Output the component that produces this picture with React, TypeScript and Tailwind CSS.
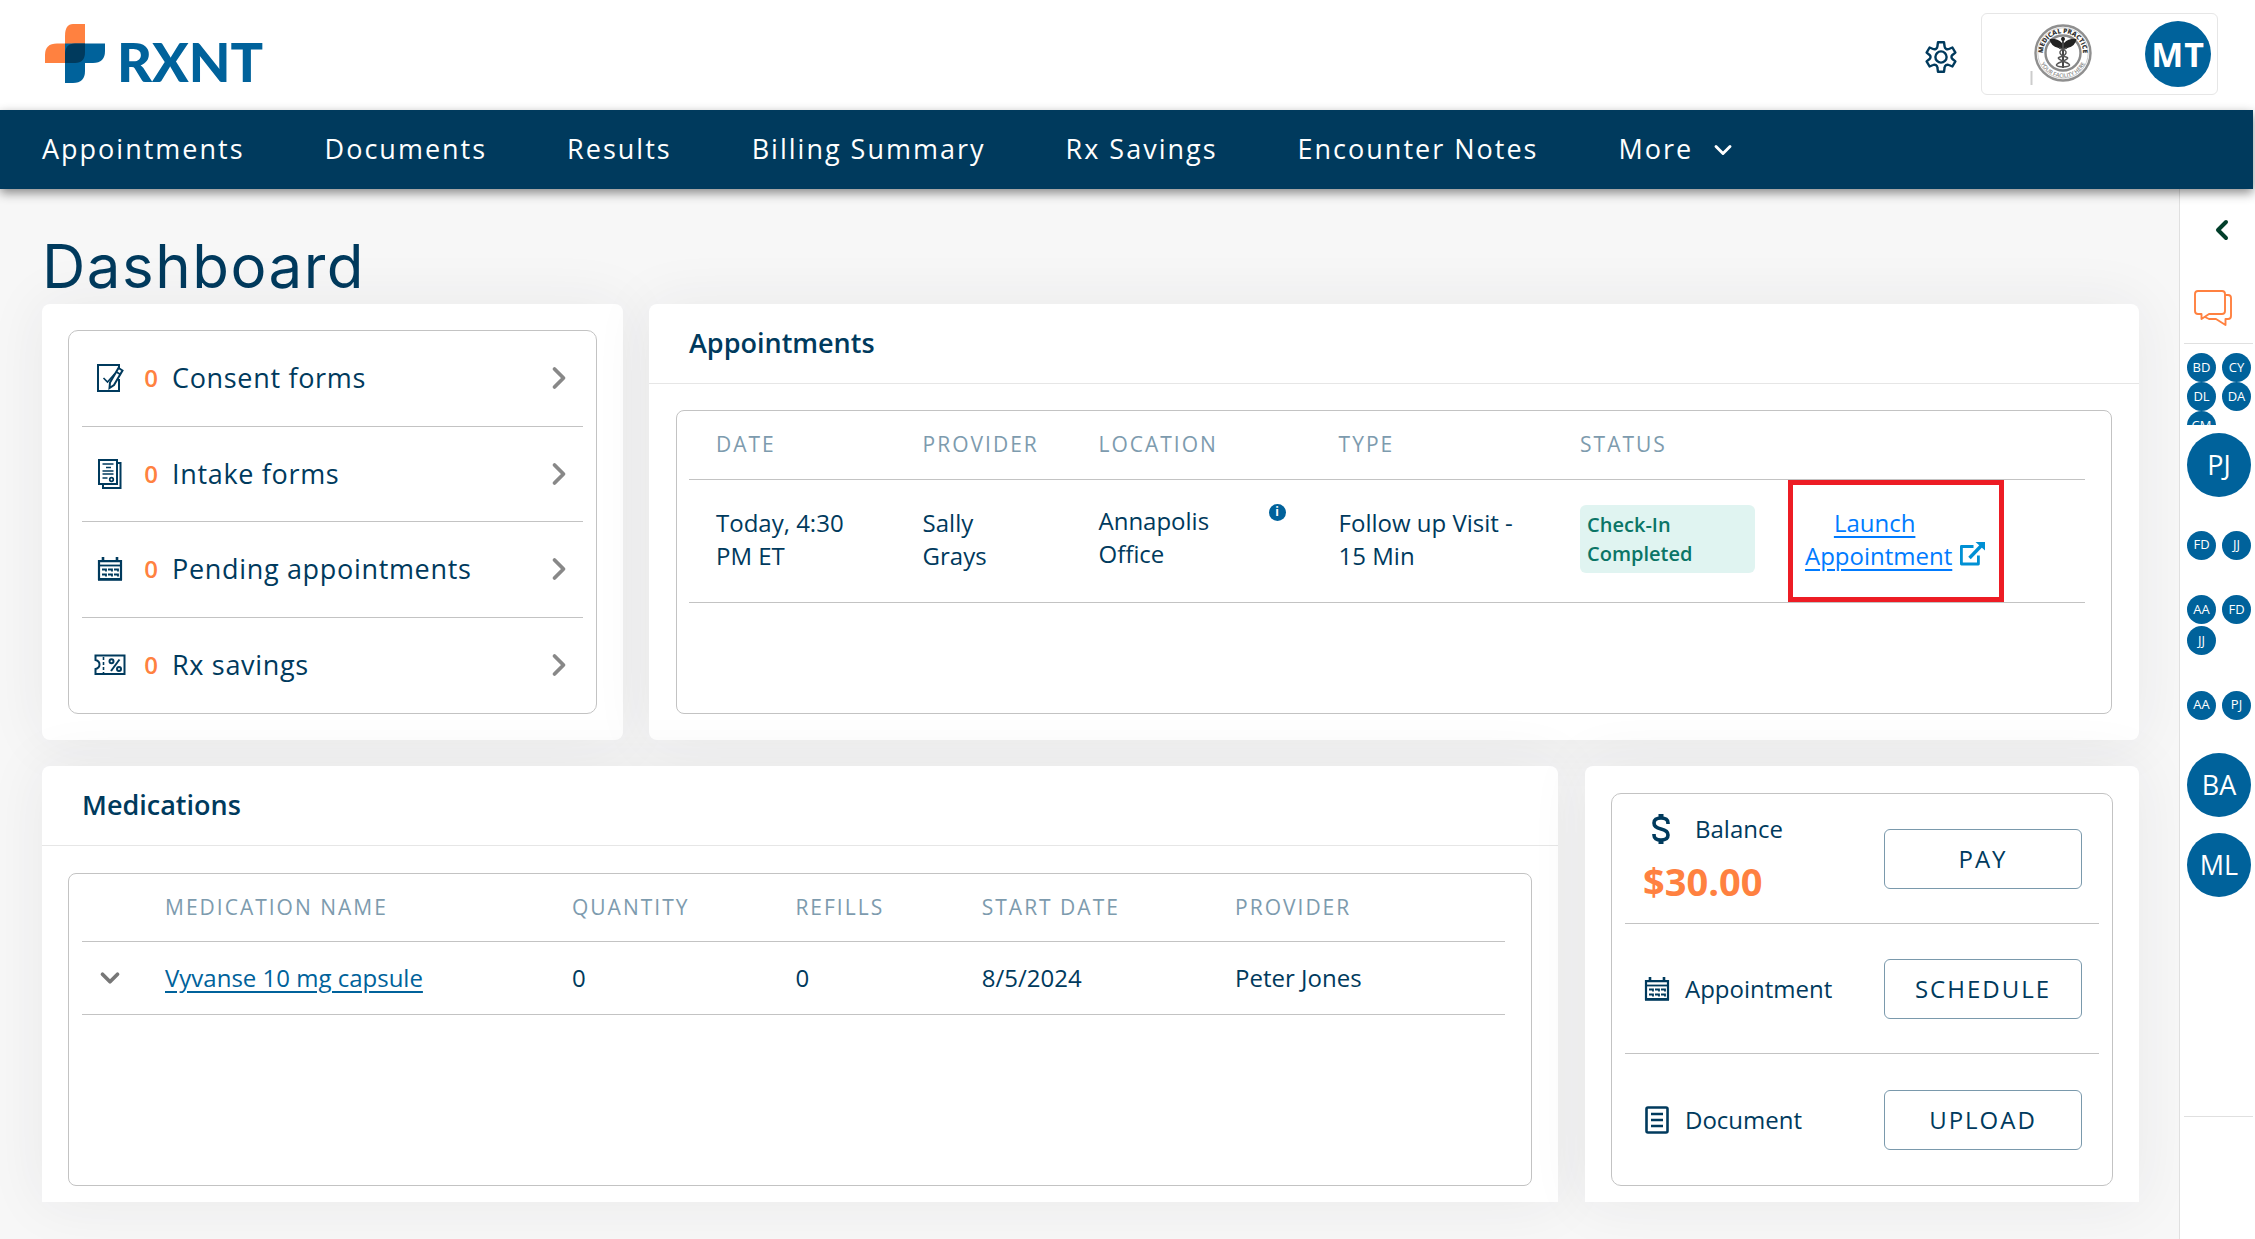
import { ChevronDown, ChevronLeft, ChevronRight } from 'lucide-react'

type IconProps = { className?: string }

const navItems = ['Appointments', 'Documents', 'Results', 'Billing Summary', 'Rx Savings', 'Encounter Notes']

function LogoMark() {
  return (
    <svg className="h-[59px] w-[60px]" viewBox="0 0 60 59" aria-hidden="true">
      <path d="M28 0h12v39H20V12Q20 0 28 0z" fill="#ff8140" />
      <path d="M12 19.500h28V39H0V31Q0 19.500 12 19.500z" fill="#ff8140" />
      <path d="M20 19.500h40V27q0 12-12 12H40v8q0 12-12 12h-8z" fill="#00629b" />
      <path d="M30 19.500h10V28q0 11-10 11H20V30.500q0-11 10-11z" fill="#003a5d" />
    </svg>
  )
}

function GearIcon({ className }: IconProps) {
  return (
    <svg className={className} viewBox="0 0 32 32" fill="none" stroke="currentColor" strokeWidth="2.400" strokeLinejoin="round" aria-hidden="true">
      <path d="M13 1.200h6l.6 4.300a3 3 0 0 0 4.300 2.500l3.500-1.500 3 5.100-3 2.400a2.600 2.600 0 0 0 0 4l3 2.400-3 5.100-3.500-1.500a3 3 0 0 0-4.300 2.500l-.6 4.300h-6l-.6-4.300a3 3 0 0 0-4.300-2.500l-3.500 1.500-3-5.100 3-2.400a2.600 2.600 0 0 0 0-4l-3-2.400 3-5.100L8.100 8a3 3 0 0 0 4.300-2.500z" />
      <circle cx="16" cy="16" r="5.600" />
    </svg>
  )
}

function PracticeSeal() {
  return (
    <svg className="h-[66px] w-[66px]" viewBox="0 0 66 66" role="img" aria-label="Medical practice">
      <defs>
        <path id="seal-top" d="M13 32a20 20 0 0 1 40 0" />
        <path id="seal-bottom" d="M8.500 32a24.500 24.500 0 0 0 49 0" />
      </defs>
      <circle cx="33" cy="32" r="27.500" fill="none" stroke="#8f8f8f" strokeWidth="2.400" />
      <circle cx="33" cy="32" r="25.200" fill="none" stroke="#cfcfcf" strokeWidth="1" />
      <circle cx="33" cy="32" r="17.500" fill="none" stroke="#8a8a8a" strokeWidth="2.400" />
      <text fontFamily="Open Sans, sans-serif" fontSize="6.500" fontWeight="800" fill="#333">
        <textPath href="#seal-top" startOffset="50%" textAnchor="middle">MEDICAL PRACTICE</textPath>
      </text>
      <text fontFamily="Open Sans, sans-serif" fontSize="5.500" fontWeight="600" fill="#888">
        <textPath href="#seal-bottom" startOffset="50%" textAnchor="middle">YOUR FACILITY HERE</textPath>
      </text>
      <path d="M32 22q-5-5-12.500-4 1 7 9 9l3.500 1zM34 22q5-5 12.500-4-1 7-9 9l-3.500 1z" fill="#222" />
      <path d="M33 16v31" stroke="#333" strokeWidth="1.800" />
      <path d="M29 27q8 2 7 5t-6 4 5 5-2 5" fill="none" stroke="#555" strokeWidth="1.500" />
      <path d="M37 27q-8 2-7 5t6 4-5 5 2 5" fill="none" stroke="#555" strokeWidth="1.500" />
      <circle cx="33" cy="18" r="2" fill="#222" />
      <path d="M1.500 50v14" stroke="#ccc" strokeWidth="2" />
    </svg>
  )
}

function ConsentIcon() {
  return (
    <svg className="h-[30px] w-7" viewBox="0 0 28 30" fill="none" stroke="currentColor" strokeWidth="2" aria-hidden="true">
      <path d="M23 6V2H2v26h21V16" />
      <path d="M7.500 15l4 4 7.500-8.500" strokeWidth="1.600" />
      <path d="M22.500 5l4 2.500-8.500 14.500-4.500 3 .5-5.500z" strokeWidth="2" fill="#fff" />
      <path d="M20.500 9l4 2.400" strokeWidth="1.800" />
    </svg>
  )
}

function IntakeIcon() {
  return (
    <svg className="h-[30px] w-7" viewBox="0 0 28 30" fill="none" stroke="currentColor" strokeWidth="2" aria-hidden="true">
      <path d="M3 1h18v24H3z" />
      <path d="M21 4h3.500v25H7v-4" />
      <path d="M6.500 5h11M10 8.500h5M6.500 12h11M6.500 15h11M6.500 19h5" strokeWidth="1.700" />
      <circle cx="15.500" cy="20.500" r="1.800" strokeWidth="1.700" />
    </svg>
  )
}

function CalendarIcon() {
  return (
    <svg className="h-6 w-7" viewBox="0 0 28 24" fill="none" stroke="currentColor" strokeWidth="2.200" aria-hidden="true">
      <path d="M3 4.200h22V22H3z" />
      <path d="M2 22.400h24" strokeWidth="2.800" />
      <path d="M7 0v5M21 0v5" strokeWidth="2.600" />
      <path d="M4 8.500h20" strokeWidth="1.800" />
      <path d="M6 12.500h4v2M12 12.500h4v2M18 12.500h4v2M6 17.500h4v2M12 17.500h4v2M18 17.500h4v2" strokeWidth="1.800" />
    </svg>
  )
}

function CouponIcon() {
  return (
    <svg className="h-[22px] w-8" viewBox="0 0 32 22" fill="none" stroke="currentColor" strokeWidth="2" aria-hidden="true">
      <path d="M1.500 1.500h29v18.500h-29v-5q4-1 4-4.500t-4-4.500z" />
      <path d="M9.500 3v16" strokeDasharray="3 2" strokeWidth="1.600" />
      <path d="M25.500 5.500l-8.500 11.500" />
      <circle cx="17.500" cy="7.200" r="2" />
      <circle cx="25" cy="15" r="2" />
    </svg>
  )
}

function DollarIcon() {
  return (
    <svg className="h-8 w-5" viewBox="0 0 20 32" fill="none" stroke="currentColor" strokeWidth="3.600" aria-hidden="true">
      <path d="M17 11V10q0-5-7-5t-7 5q0 4.500 7 6t7 6q0 5-7 5t-7-5v-1" />
      <path d="M10 1v4M10 27v4" strokeWidth="5" />
    </svg>
  )
}

function DocumentIcon() {
  return (
    <svg className="h-7 w-6" viewBox="0 0 24 28" fill="none" stroke="currentColor" strokeWidth="2.600" aria-hidden="true">
      <rect x="1.500" y="1.500" width="21" height="25" rx="1.500" />
      <path d="M6 8h12M6 14h12M6 20h12" strokeWidth="2.400" />
    </svg>
  )
}

function LaunchIcon() {
  return (
    <svg className="h-6 w-7" viewBox="0 0 28 24" fill="none" stroke="#0090d4" strokeWidth="2.800" aria-hidden="true">
      <path d="M15.500 4.500H3.400V22h17v-8.500" strokeLinejoin="round" />
      <path d="M11.500 16L23 4" strokeWidth="3.400" />
      <path d="M17.500 0H27v8.500z" fill="#0090d4" stroke="none" />
    </svg>
  )
}

function ChatIcon() {
  return (
    <svg className="h-9 w-[38px]" viewBox="0 0 38 36" fill="none" stroke="#ff8140" strokeWidth="1.900" strokeLinejoin="round" aria-hidden="true">
      <path d="M4 1h24q3 0 3 3v17q0 3-3 3H15l-7.500 5V24H4q-3 0-3-3V4q0-3 3-3z" />
      <path d="M31 5h3q3 0 3 3v18q0 3-3 3h-2.500v6L22 29h-7l-4-2" />
    </svg>
  )
}

const formRows = [
  { label: 'Consent forms', Icon: ConsentIcon },
  { label: 'Intake forms', Icon: IntakeIcon },
  { label: 'Pending appointments', Icon: CalendarIcon },
  { label: 'Rx savings', Icon: CouponIcon },
]

// each entry is one conversation thread
const threads = [['PJ'], ['FD', 'JJ'], ['AA', 'FD', 'JJ'], ['AA', 'PJ'], ['BA'], ['ML']]

const card = 'bg-white shadow-[0_0_60px_rgba(40,40,60,0.07)]'
const cardTitle = 'flex h-20 items-center border-b border-[#e6e6e6] pl-10 text-[27px] font-semibold'
const th = 'pl-[27px] text-left font-normal tracking-[2px] text-[#7d9bae]'
const td = 'pl-[27px] pb-1'
const actionButton =
  'h-[60px] w-[198px] rounded-md border border-[#7a99ac] bg-white text-2xl tracking-[2px] text-[#003a5d]'

function SmallAvatar({ initials }: { initials: string }) {
  return (
    <span className="flex h-[29px] w-[29px] items-center justify-center rounded-full bg-[#00629b] text-[13px] text-white">
      {initials}
    </span>
  )
}

function Thread({ people }: { people: string[] }) {
  if (people.length === 1) {
    return (
      <button className="flex h-20 w-full items-center pl-[7px]">
        <span className="flex h-16 w-16 items-center justify-center rounded-full bg-[#00629b] text-[27px] text-white">
          {people[0]}
        </span>
      </button>
    )
  }
  return (
    <button className="flex h-20 w-full flex-wrap content-center gap-x-1.5 gap-y-0.5 pl-[7px]">
      {people.map((p) => (
        <SmallAvatar key={p} initials={p} />
      ))}
    </button>
  )
}

function Header() {
  return (
    <header className="flex h-[110px] items-start justify-between bg-white pl-[45px] pr-[35px]">
      <a href="#" className="flex items-end gap-3 pt-6 text-[#00629b]" aria-label="RXNT">
        <LogoMark />
        <span className="font-[Lato] text-[54px] font-black leading-[42px]">RXNT</span>
      </a>
      <div className="flex items-center gap-6 pt-[13px]">
        <button aria-label="Settings" className="pt-1.5 text-[#003a5d]">
          <GearIcon className="h-8 w-8" />
        </button>
        <button className="flex h-[82px] w-[237px] items-center justify-end gap-[49px] rounded-md border border-[#e6e6e6] pr-1.5">
          <PracticeSeal />
          <span className="flex h-[66px] w-[66px] items-center justify-center rounded-full bg-[#00629b] text-[34px] font-bold tracking-wide text-white">
            MT
          </span>
        </button>
      </div>
    </header>
  )
}

function Nav() {
  return (
    <nav className="relative z-10 flex h-[79px] items-center gap-20 bg-[#003a5d] px-[42px] text-[27px] tracking-[2px] text-white shadow-[0_4px_10px_rgba(0,0,0,0.45)]">
      {navItems.map((item) => (
        <a key={item} href="#">{item}</a>
      ))}
      <button className="flex items-center gap-4 tracking-[2px]">
        More
        <ChevronDown className="h-7 w-7" strokeWidth={2.5} />
      </button>
    </nav>
  )
}

function FormsCard() {
  return (
    <section className={`${card} w-[581px] shrink-0 rounded-lg p-[26px]`}>
      <ul className="h-full rounded-[10px] border border-[#c3c3c3] px-[13px]">
        {formRows.map(({ label, Icon }) => (
          <li key={label} className="h-1/4 border-b border-[#c3c3c3] last:border-b-0">
            <a href="#" className="flex h-full items-center pl-3 pr-1.5">
              <span className="flex w-8 justify-center"><Icon /></span>
              <span className="w-[46px] pl-1 text-center text-2xl font-semibold text-[#ff8140]">0</span>
              <span className="flex-1 text-[27px] tracking-wide">{label}</span>
              <ChevronRight className="h-9 w-9 text-[#888]" strokeWidth={2.5} />
            </a>
          </li>
        ))}
      </ul>
    </section>
  )
}

function AppointmentsCard() {
  return (
    <section className={`${card} flex flex-1 flex-col rounded-lg`}>
      <h2 className={cardTitle}>Appointments</h2>
      <div className="mx-[27px] my-[26px] h-[304px] rounded-lg border border-[#c3c3c3] pl-3 pr-[26px]">
        <table className="w-full table-fixed border-collapse text-2xl leading-[33px]">
          <colgroup>
            <col className="w-[14.8%]" />
            <col className="w-[12.6%]" />
            <col className="w-[17.2%]" />
            <col className="w-[17.3%]" />
            <col className="w-[16.3%]" />
            <col />
          </colgroup>
          <thead>
            <tr className="h-[68px] border-b border-[#c3c3c3] text-[21px]">
              <th className={th}>DATE</th>
              <th className={th}>PROVIDER</th>
              <th className={th}>LOCATION</th>
              <th className={th}>TYPE</th>
              <th className={th}>STATUS</th>
              <td />
            </tr>
          </thead>
          <tbody>
            <tr className="h-[123px] border-b border-[#c3c3c3]">
              <td className={td}>Today, 4:30<br />PM ET</td>
              <td className={td}>Sally<br />Grays</td>
              <td className="pr-[26px] pb-2 pl-[27px]">
                <div className="flex items-start justify-between">
                  <span>Annapolis<br />Office</span>
                  <span className="flex h-[17px] w-[17px] items-center justify-center rounded-full bg-[#00629b] text-xs font-bold text-white">i</span>
                </div>
              </td>
              <td className={td}>Follow up Visit -<br />15 Min</td>
              <td className="pr-[26px] pb-1 pl-[27px]">
                <span className="block rounded-md bg-[#e0f4f1] px-[7px] py-[5px] text-xl font-semibold leading-[29px] text-[#0a7566]">
                  Check-In<br />Completed
                </span>
              </td>
              <td className="pl-[7px]">
                <div className="flex h-[122px] w-[216px] items-center justify-center border-[5px] border-[#ed1c24] pb-1">
                  <a href="#" className="flex items-end gap-1.5 text-center text-[#007bff] underline underline-offset-4">
                    <span><span className="mr-2">Launch</span><br />Appointment</span>
                    <span className="pb-1.5"><LaunchIcon /></span>
                  </a>
                </div>
              </td>
            </tr>
          </tbody>
        </table>
      </div>
    </section>
  )
}

function MedicationsCard() {
  return (
    <section className={`${card} flex-1 rounded-t-lg`}>
      <h2 className={cardTitle}>Medications</h2>
      <div className="mx-[26px] mt-[27px] mb-4 h-[313px] rounded-lg border border-[#c3c3c3] pl-[13px] pr-[26px]">
        <table className="w-full table-fixed border-collapse text-2xl">
          <colgroup>
            <col className="w-[56px]" />
            <col className="w-[28.6%]" />
            <col className="w-[15.7%]" />
            <col className="w-[13.1%]" />
            <col className="w-[17.8%]" />
            <col />
          </colgroup>
          <thead>
            <tr className="h-[67px] border-b border-[#c3c3c3] text-[21px]">
              <td />
              <th className={th}>MEDICATION NAME</th>
              <th className={th}>QUANTITY</th>
              <th className={th}>REFILLS</th>
              <th className={th}>START DATE</th>
              <th className={th}>PROVIDER</th>
            </tr>
          </thead>
          <tbody>
            <tr className="h-[73px] border-b border-[#c3c3c3]">
              <td>
                <button aria-label="Expand" className="mx-auto block text-[#777]">
                  <ChevronDown className="h-[30px] w-[30px]" strokeWidth={3} />
                </button>
              </td>
              <td className="pl-[27px]">
                <a href="#" className="text-[#00629b] underline underline-offset-4">Vyvanse 10 mg capsule</a>
              </td>
              <td className="pl-[27px]">0</td>
              <td className="pl-[27px]">0</td>
              <td className="pl-[27px]">8/5/2024</td>
              <td className="pl-[27px]">Peter Jones</td>
            </tr>
          </tbody>
        </table>
      </div>
    </section>
  )
}

function BalanceCard() {
  return (
    <section className={`${card} w-[554px] shrink-0 rounded-t-lg px-[26px] pt-[27px] pb-4`}>
      <div className="rounded-[10px] border border-[#c3c3c3] px-[13px] text-2xl">
        <div className="flex h-[130px] items-center justify-between border-b border-[#c3c3c3] pl-[18px] pr-[17px]">
          <div>
            <div className="flex items-center gap-6 pl-2">
              <DollarIcon />
              <span>Balance</span>
            </div>
            <div className="pt-3 text-[38px] leading-[48px] font-bold text-[#ff8140]">$30.00</div>
          </div>
          <button className={actionButton}>PAY</button>
        </div>
        <div className="flex h-[130px] items-center justify-between border-b border-[#c3c3c3] pl-[18px] pr-[17px]">
          <div className="flex items-center gap-3.5">
            <CalendarIcon />
            <span>Appointment</span>
          </div>
          <button className={actionButton}>SCHEDULE</button>
        </div>
        <div className="flex h-[131px] items-center justify-between pl-5 pr-[17px]">
          <div className="flex items-center gap-4">
            <DocumentIcon />
            <span>Document</span>
          </div>
          <button className={actionButton}>UPLOAD</button>
        </div>
      </div>
    </section>
  )
}

function Sidebar() {
  return (
    <aside className="w-[74px] shrink-0 border-l border-[#e0e0e0] bg-white">
      <button aria-label="Expand messages" className="ml-[26px] mt-[25px] block text-[#023f2b]">
        <ChevronLeft className="h-8 w-8" strokeWidth={3} />
      </button>
      <button aria-label="Messages" className="ml-3.5 mt-11 block">
        <ChatIcon />
      </button>
      <div className="ml-1 mt-[17px] h-[83px] border-t border-[#e0e0e0] pt-[9px] pl-[3px]">
        <button className="flex h-[72px] flex-wrap content-start gap-x-1.5 overflow-hidden">
          {['BD', 'CY', 'DL', 'DA', 'CM'].map((p) => (
            <SmallAvatar key={p} initials={p} />
          ))}
        </button>
      </div>
      <div className="ml-1 -mt-px h-[692px] border-b border-[#e0e0e0]">
        <div className="-ml-1">
          {threads.map((people, i) => (
            <Thread key={i} people={people} />
          ))}
        </div>
      </div>
    </aside>
  )
}

function App() {
  return (
    <div className="flex min-h-screen flex-col bg-white pr-0.5 font-['Open_Sans',sans-serif] text-[#003a5d]">
      <Header />
      <Nav />
      <div className="flex flex-1">
        <main className="flex-1 overflow-hidden bg-[#f7f7f7] pl-[42px] pr-10 pb-9">
          <h1 className="pt-[39px] font-[Inter] text-[60px] leading-[76px] tracking-wide">Dashboard</h1>
          <div className="flex gap-[26px]">
            <FormsCard />
            <AppointmentsCard />
          </div>
          <div className="flex gap-[27px] pt-[26px]">
            <MedicationsCard />
            <BalanceCard />
          </div>
        </main>
        <Sidebar />
      </div>
    </div>
  )
}

export default App
